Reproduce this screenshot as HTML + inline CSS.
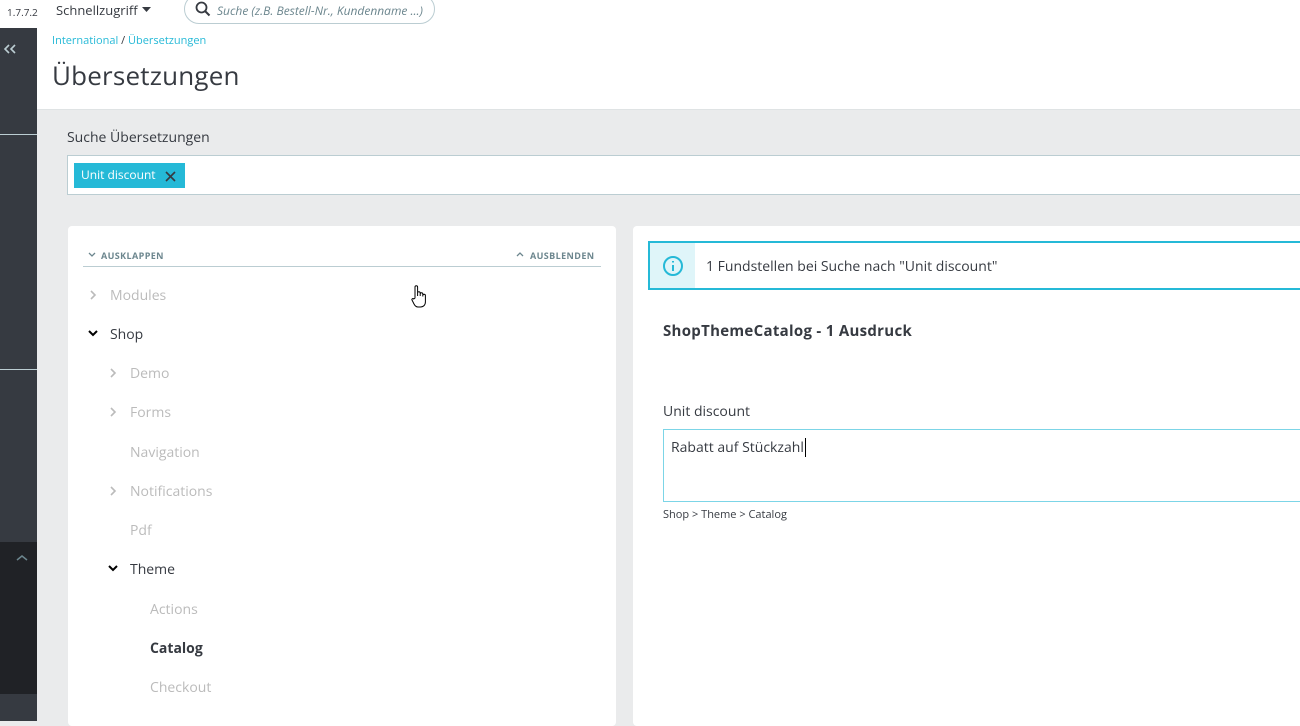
<!DOCTYPE html>
<html><head><meta charset="utf-8"><style>
*{margin:0;padding:0;box-sizing:border-box}
body{width:1300px;height:721px;overflow:hidden;background:#eaebec;font-family:"Open Sans","Liberation Sans",sans-serif;color:#363a41;position:relative}
.a{position:absolute}
.tree{font-size:14px}
</style></head><body>
<div class="a" style="left:0;top:0;width:1300px;height:28px;background:#fff"></div>
<div class="a" style="left:7px;top:5px;font-size:10px;color:#363a41">1.7.7.2</div>
<div class="a" style="left:56px;top:1px;font-size:13px;color:#363a41">Schnellzugriff</div>
<svg class="a" style="left:142px;top:7px" width="10" height="6"><path d="M0 0h9L4.5 5z" fill="#363a41"/></svg>
<div class="a" style="left:184px;top:-6px;width:251px;height:30px;border:1px solid #bbcdd2;border-radius:16px;background:#fff"></div>
<svg class="a" style="left:195px;top:1px" width="16" height="16" viewBox="0 0 16 16"><circle cx="6.5" cy="6.5" r="5" fill="none" stroke="#363a41" stroke-width="1.8"/><path d="M10 10l4.5 4.5" stroke="#363a41" stroke-width="2"/></svg>
<div class="a" style="left:217px;top:2px;font-size:12px;font-style:italic;color:#6c868e;white-space:nowrap;width:212px;overflow:hidden">Suche (z.B. Bestell-Nr., Kundenname ...)</div>
<div class="a" style="left:0;top:28px;width:37px;height:693px;background:#363a41"></div>
<div class="a" style="left:0;top:134px;width:37px;height:1px;background:#bbcdd2"></div>
<div class="a" style="left:0;top:369px;width:37px;height:1px;background:#bbcdd2"></div>
<div class="a" style="left:0;top:542px;width:37px;height:152px;background:#202226"></div>
<svg class="a" style="left:3px;top:44px" width="14" height="10"><path d="M6 1L2 5l4 4M12 1L8 5l4 4" fill="none" stroke="#bbcdd2" stroke-width="1.6"/></svg>
<svg class="a" style="left:16px;top:554px" width="12" height="8"><path d="M1 6l5-4 5 4" fill="none" stroke="#6c868e" stroke-width="1.5"/></svg>
<div class="a" style="left:37px;top:28px;width:1263px;height:82px;background:#fff;border-bottom:1px solid #dfe3e4"></div>
<div class="a" style="left:52px;top:33px;font-size:11px;color:#25b9d7">International <span style="color:#363a41">/</span> Übersetzungen</div>
<div class="a" style="left:52px;top:57px;font-size:26px;color:#363a41;letter-spacing:.2px">Übersetzungen</div>
<div class="a" style="left:67px;top:128px;font-size:14px">Suche Übersetzungen</div>
<div class="a" style="left:67px;top:155px;width:1240px;height:40px;background:#fff;border:1px solid #bbcdd2"></div>
<div class="a" style="left:74px;top:163px;width:111px;height:25px;background:#25b9d7;color:#fff;font-size:12px;padding:3px 7px">Unit discount</div>
<svg class="a" style="left:165px;top:171px" width="11" height="11"><path d="M1 1l9 9M10 1l-9 9" stroke="#363a41" stroke-width="1.6"/></svg>
<div class="a" style="left:68px;top:226px;width:548px;height:500px;background:#fff;border-radius:4px"></div>
<svg class="a" style="left:88px;top:252px" width="8" height="6"><path d="M1 1l3 3 3-3" fill="none" stroke="#6c868e" stroke-width="1.3"/></svg>
<div class="a" style="left:101px;top:249px;font-size:9px;font-weight:bold;color:#6c868e;letter-spacing:.4px">AUSKLAPPEN</div>
<svg class="a" style="left:516px;top:251px" width="8" height="6"><path d="M1 5l3-3 3 3" fill="none" stroke="#6c868e" stroke-width="1.3"/></svg>
<div class="a" style="left:530px;top:249px;font-size:9px;font-weight:bold;color:#6c868e;letter-spacing:.4px">AUSBLENDEN</div>
<div class="a" style="left:83px;top:266px;width:518px;height:1px;background:#bbcdd2"></div>
<svg width="0" height="0" style="position:absolute"><defs>
<path id="r" d="M1 1l4 4-4 4" fill="none" stroke="#bbb" stroke-width="1.6"/>
<path id="d" d="M1 1l4 4 4-4" fill="none" stroke="#000" stroke-width="2"/></defs></svg>
<div class="tree">
<svg class="a" style="left:90px;top:290px" width="8" height="10"><use href="#r"/></svg>
<div class="a" style="left:110px;top:286px;color:#bbb">Modules</div>
<svg class="a" style="left:88px;top:330px" width="10" height="7"><use href="#d"/></svg>
<div class="a" style="left:110px;top:325px">Shop</div>
<svg class="a" style="left:110px;top:368px" width="8" height="10"><use href="#r"/></svg>
<div class="a" style="left:130px;top:364px;color:#bbb">Demo</div>
<svg class="a" style="left:110px;top:407px" width="8" height="10"><use href="#r"/></svg>
<div class="a" style="left:130px;top:403px;color:#bbb">Forms</div>
<div class="a" style="left:130px;top:443px;color:#bbb">Navigation</div>
<svg class="a" style="left:110px;top:486px" width="8" height="10"><use href="#r"/></svg>
<div class="a" style="left:130px;top:482px;color:#bbb">Notifications</div>
<div class="a" style="left:130px;top:521px;color:#bbb">Pdf</div>
<svg class="a" style="left:108px;top:565px" width="10" height="7"><use href="#d"/></svg>
<div class="a" style="left:130px;top:560px">Theme</div>
<div class="a" style="left:150px;top:600px;color:#bbb">Actions</div>
<div class="a" style="left:150px;top:639px;font-weight:bold;color:#363a41">Catalog</div>
<div class="a" style="left:150px;top:678px;color:#bbb">Checkout</div>
</div>
<div class="a" style="left:633px;top:226px;width:680px;height:500px;background:#fff;border-radius:4px"></div>
<div class="a" style="left:648px;top:241px;width:660px;height:49px;border:2px solid #25b9d7;background:#fff"></div>
<div class="a" style="left:650px;top:243px;width:45px;height:45px;background:#dff5f9"></div>
<svg class="a" style="left:662px;top:255px" width="22" height="22" viewBox="0 0 22 22"><circle cx="11" cy="11" r="9" fill="none" stroke="#25b9d7" stroke-width="2"/><path d="M11 10v6M11 6v1.5" stroke="#25b9d7" stroke-width="2"/></svg>
<div class="a" style="left:706px;top:257px;font-size:14px">1 Fundstellen bei Suche nach "Unit discount"</div>
<div class="a" style="left:663px;top:321px;font-size:15px;font-weight:bold;letter-spacing:.3px">ShopThemeCatalog - 1 Ausdruck</div>
<div class="a" style="left:663px;top:402px;font-size:14px">Unit discount</div>
<div class="a" style="left:663px;top:429px;width:650px;height:73px;border:1px solid #7cd5e7;background:#fff"></div>
<div class="a" style="left:671px;top:438px;font-size:14px">Rabatt auf Stückzahl<span style="border-left:1px solid #000;margin-left:1px"></span></div>
<div class="a" style="left:663px;top:507px;font-size:11px">Shop &gt; Theme &gt; Catalog</div>
<svg class="a" style="left:411px;top:284px" width="16" height="26" viewBox="0 0 16 26"><path d="M4 14V3a1.3 1.3 0 0 1 2.6 0v9V9a1.3 1.3 0 0 1 2.6 0v3-2a1.3 1.3 0 0 1 2.6 0v2.5-1a1.3 1.3 0 0 1 2.6 0V18c0 3-2 5-5 5H7c-2 0-3-1-4-3l-2-4c-.5-1 .8-2 1.8-1z" fill="#fff" stroke="#000" stroke-width="1"/></svg>
</body></html>
